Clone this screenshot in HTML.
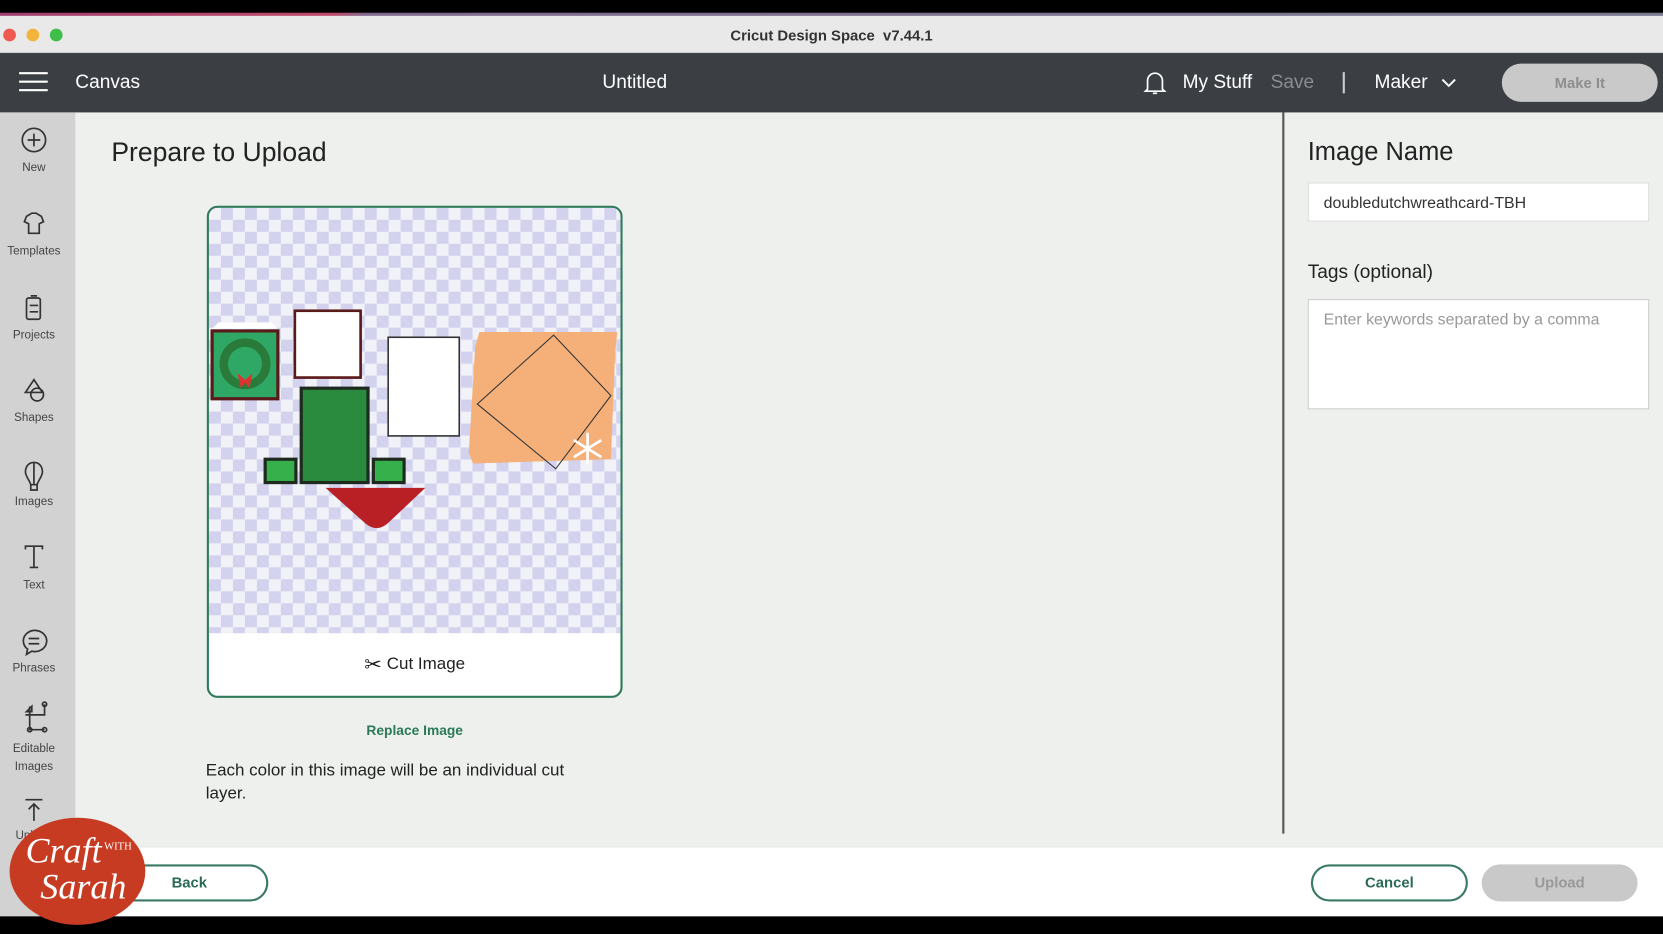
<!DOCTYPE html>
<html><head><meta charset="utf-8">
<style>
*{box-sizing:border-box;margin:0;padding:0}
html,body{width:1663px;height:934px;overflow:hidden;background:#000;font-family:"Liberation Sans",sans-serif}
#w{position:absolute;left:0;top:0;width:1568px;height:881px;transform:scale(1.0606);transform-origin:0 0;background:#eef0ee;overflow:hidden}
.a{position:absolute}
.lbl{position:absolute;width:64px;text-align:center;font-size:11px;color:#444;left:0}
</style></head><body><div id="w">
<div class="a" style="left:0;top:0;width:1568px;height:14px;background:#000"></div>
<div class="a" style="left:0;top:12px;width:1568px;height:3px;background:linear-gradient(90deg,#a04070,#c04a6a 20%,#806a90 22%,#7a7a90)"></div>
<div class="a" style="left:0;top:15px;width:1568px;height:35px;background:#e9e9e9;border-bottom:1px solid #cfcfcf"></div>
<div class="a" style="left:3px;top:27px;width:12px;height:12px;border-radius:50%;background:#ee5a50"></div>
<div class="a" style="left:25px;top:27px;width:12px;height:12px;border-radius:50%;background:#f2b53a"></div>
<div class="a" style="left:47px;top:27px;width:12px;height:12px;border-radius:50%;background:#3fbe4a"></div>
<div class="a" style="left:0;top:25px;width:1568px;text-align:center;font-size:14px;font-weight:bold;color:#333">Cricut Design Space &nbsp;v7.44.1</div>
<div class="a" style="left:0;top:50px;width:1568px;height:56px;background:#3b3f44"></div>
<div class="a" style="left:18px;top:68px;width:27px;height:2px;background:#fff;box-shadow:0 8px 0 #fff,0 16px 0 #fff"></div>
<div class="a" style="left:71px;top:67px;font-size:18px;color:#fff">Canvas</div>
<div class="a" style="left:568px;top:67px;font-size:18px;color:#fff">Untitled</div>
<svg class="a" style="left:1077px;top:65px" width="24" height="26" viewBox="0 0 24 26"><path d="M5 19V11a7 7 0 0 1 14 0v8l2 2H3z M10 23h4" fill="none" stroke="#fff" stroke-width="1.6"/></svg>
<div class="a" style="left:1115px;top:67px;font-size:18px;color:#fff">My Stuff</div>
<div class="a" style="left:1198px;top:67px;font-size:18px;color:#8a8d91">Save</div>
<div class="a" style="left:1266px;top:68px;width:2px;height:20px;background:#ccc"></div>
<div class="a" style="left:1296px;top:67px;font-size:18px;color:#fff">Maker</div>
<svg class="a" style="left:1358px;top:72px" width="16" height="12"><path d="M2 3l6 6 6-6" fill="none" stroke="#fff" stroke-width="1.8"/></svg>
<div class="a" style="left:1416px;top:60px;width:147px;height:36px;border-radius:18px;background:#c9c9c9;color:#8e8e8e;font-size:14px;font-weight:bold;text-align:center;line-height:36px">Make It</div>
<div class="a" style="left:0;top:106px;width:71px;height:760px;background:#d2d2d2"></div>
<svg class="a" style="left:0;top:106px" width="64" height="690" viewBox="0 0 64 690" fill="none" stroke="#333" stroke-width="1.6">
<circle cx="32" cy="26" r="11"/><path d="M32 20v12M26 26h12"/>
<path d="M25 98l5-3h4l5 3 2 5-4 2v9H27v-9l-4-2z"/>
<rect x="25" y="175" width="13" height="20" rx="2"/><path d="M29 173h6M28 182h8M28 188h8"/>
<path d="M32 252l-8 12h16z"/><circle cx="35" cy="266" r="6"/>
<path d="M32 330c-6 0-8 5-8 9 0 4 4 8 5 12h6c1-4 5-8 5-12 0-4-2-9-8-9zM29 351v5h6v-5M32 330v21"/>
<path d="M24 412v-3h16v3M32 409v20M28 429h8"/>
<path d="M22 498a11 10 0 1 1 8 10l-5 3 1-5a10 10 0 0 1-4-8zM27 496h10M27 501h10"/>
<path d="M28 560v22h14M24 568h18v-10M30 560l-5 5h5z" /><circle cx="28" cy="582" r="2"/><circle cx="42" cy="582" r="2"/><circle cx="42" cy="558" r="2"/>
<path d="M24 648h16M32 668v-16M27 657l5-5 5 5"/>
</svg>
<div class="lbl" style="top:152px">New</div>
<div class="lbl" style="top:231px">Templates</div>
<div class="lbl" style="top:310px">Projects</div>
<div class="lbl" style="top:388px">Shapes</div>
<div class="lbl" style="top:467px">Images</div>
<div class="lbl" style="top:546px">Text</div>
<div class="lbl" style="top:624px">Phrases</div>
<div class="lbl" style="top:698px;line-height:17px">Editable<br>Images</div>
<div class="lbl" style="top:782px">Upload</div>
<div class="a" style="left:105px;top:130px;font-size:25px;color:#222">Prepare to Upload</div>
<div class="a" style="left:195px;top:194px;width:392px;height:464px;border:2px solid #2f7a5a;border-radius:10px;background:#fff;overflow:hidden">
<div class="a" style="left:0;top:0;width:388px;height:401px;background-color:#f1f1f8;background-image:linear-gradient(45deg,#d2d2ee 25%,transparent 25%,transparent 75%,#d2d2ee 75%),linear-gradient(45deg,#d2d2ee 25%,transparent 25%,transparent 75%,#d2d2ee 75%);background-size:22.6px 22.6px;background-position:0 0,11.3px 11.3px"></div>
<svg class="a" style="left:0;top:0" width="388" height="401" viewBox="197 196 388 401">
<path d="M200 310l6-6h50l6 6z" fill="#fff"/>
<rect x="200" y="312" width="62" height="64" fill="#2fa866" stroke="#5a1a1a" stroke-width="3"/>
<circle cx="231" cy="343" r="20" fill="none" stroke="#2a7a3a" stroke-width="8"/>
<path d="M224 352l7 6 7-6-3 14-4-5-4 5z" fill="#d33"/>
<rect x="278" y="293" width="62" height="63" fill="#fff" stroke="#5a1a1a" stroke-width="2.5"/>
<rect x="366" y="318" width="67" height="93" fill="#fff" stroke="#333" stroke-width="1.5"/>
<rect x="284" y="366" width="63" height="89" fill="#2a8a3e" stroke="#1e2a1e" stroke-width="3"/>
<rect x="250" y="433" width="29" height="22" fill="#35b04a" stroke="#1e2a1e" stroke-width="3"/>
<rect x="352" y="433" width="29" height="22" fill="#35b04a" stroke="#1e2a1e" stroke-width="3"/>
<path d="M307 460h94l-36 34q-10 8-20 0z" fill="#b92025"/>
<path d="M452 313h130l-2 20-4 100-130 4-4-10 6-100z" fill="#f5b07a"/>
<path d="M522 316l54 57-52 69-74-61z" fill="none" stroke="#333" stroke-width="1"/>
<g stroke="#fff" stroke-width="2.5"><path d="M554 408v30M541 415l26 16M541 431l26-16"/></g>
</svg>
<div class="a" style="left:0;top:418px;width:388px;text-align:center;font-size:16px;color:#222"><span style="font-size:20px;vertical-align:-2px">✂</span> Cut Image</div>
</div>
<div class="a" style="left:195px;top:681px;width:392px;text-align:center;font-size:13px;font-weight:bold;color:#2a7a5a">Replace Image</div>
<div class="a" style="left:194px;top:716px;width:380px;font-size:16px;line-height:22px;color:#222">Each color in this image will be an individual cut layer.</div>
<div class="a" style="left:1209px;top:106px;width:2px;height:680px;background:#555"></div>
<div class="a" style="left:1233px;top:130px;font-size:24px;color:#222">Image Name</div>
<div class="a" style="left:1233px;top:172px;width:322px;height:37px;background:#fff;border:1px solid #ddd;font-size:15px;color:#333;padding:10px 14px">doubledutchwreathcard-TBH</div>
<div class="a" style="left:1233px;top:246px;font-size:18px;color:#222">Tags (optional)</div>
<div class="a" style="left:1233px;top:282px;width:322px;height:104px;background:#fff;border:1px solid #ccc;font-size:15px;color:#999;padding:10px 14px">Enter keywords separated by a comma</div>
<div class="a" style="left:71px;top:798px;width:1497px;height:66px;background:#fff;border-top:1px solid #e4e4e4"></div>
<div class="a" style="left:0;top:864px;width:1568px;height:20px;background:#000"></div>
<div class="a" style="left:104px;top:815px;width:149px;height:35px;border:2px solid #3a7a64;border-radius:18px;text-align:center;line-height:31px;font-size:14px;font-weight:bold;color:#2a6a55">Back</div>
<div class="a" style="left:1236px;top:815px;width:148px;height:35px;border:2px solid #3a7a64;border-radius:18px;text-align:center;line-height:31px;font-size:14px;font-weight:bold;color:#2a6a55">Cancel</div>
<div class="a" style="left:1397px;top:815px;width:147px;height:35px;border-radius:18px;background:#c9c9c9;text-align:center;line-height:35px;font-size:14px;font-weight:bold;color:#999">Upload</div>
<div class="a" style="left:9px;top:771px;width:128px;height:101px;border-radius:50%;background:#c63b22"></div>
<div class="a" style="left:24px;top:782px;font-family:'Liberation Serif',serif;font-style:italic;font-size:34px;color:#fff;line-height:34px">Craft<span style="font-size:10px;font-style:normal;vertical-align:12px"> WITH</span><br><span style="padding-left:14px">Sarah</span></div>
</div></body></html>
